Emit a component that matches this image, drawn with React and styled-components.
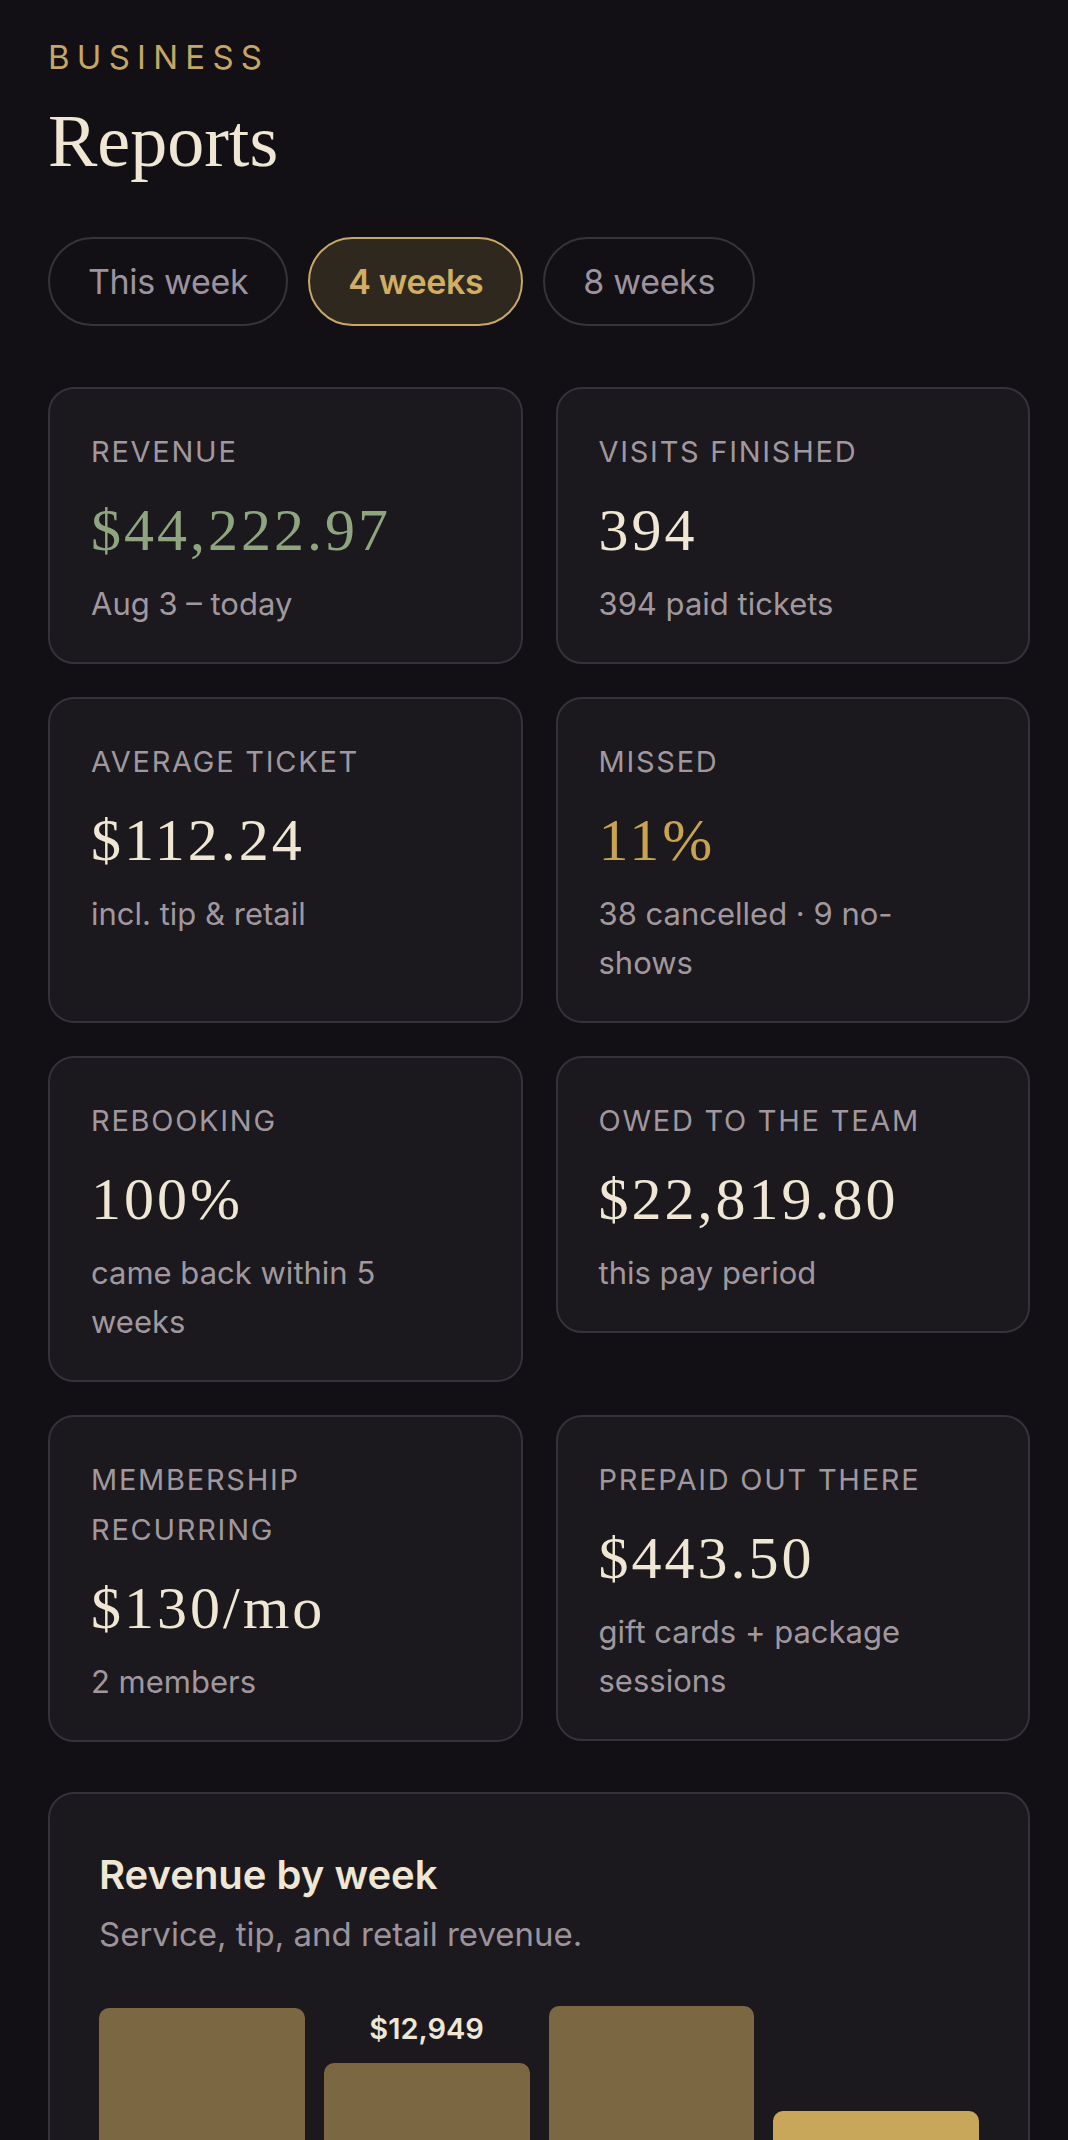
import React from 'react';
import styled, { createGlobalStyle } from 'styled-components';

const GlobalStyle = createGlobalStyle`
  html, body {
    margin: 0;
    padding: 0;
    background: #121015;
  }
  body {
    font-family: Inter, "Noto Sans", "Liberation Sans", sans-serif;
    color: #efe7d4;
  }
`;

const Page = styled.div`
  padding: 38px 38px 80px 48px;
`;

const Eyebrow = styled.div`
  font-size: 33px;
  line-height: 1.2;
  letter-spacing: 0.22em;
  color: #c6a664;
`;

const Title = styled.h1`
  margin: 24px 0 0;
  font-family: "Liberation Serif", serif;
  font-weight: 400;
  font-size: 74px;
  line-height: 78px;
  color: #efe7d4;
`;

const Ranges = styled.div`
  display: flex;
  gap: 20px;
  margin-top: 57px;
`;

const RangeButton = styled.button`
  box-sizing: border-box;
  height: 89px;
  padding: 0 38px;
  border-radius: 999px;
  border: 2px solid ${p => (p.$active ? '#c9a866' : '#38333a')};
  background: ${p => (p.$active ? '#2e281f' : 'transparent')};
  color: ${p => (p.$active ? '#d1ae63' : '#9d939e')};
  font-family: inherit;
  font-size: 34px;
  font-weight: ${p => (p.$active ? 600 : 400)};
  letter-spacing: -0.01em;
  cursor: pointer;
`;

const Grid = styled.div`
  display: grid;
  grid-template-columns: 1fr 1fr;
  gap: 33px;
  margin-top: 61px;
  align-items: start;
`;

const Card = styled.div`
  box-sizing: border-box;
  align-self: ${p => (p.$fill ? 'stretch' : 'start')};
  padding: 38px 70px 34px 41px;
  background: #1b191d;
  border: 2px solid #36313a;
  border-radius: 26px;
`;

const Label = styled.div`
  font-size: 29px;
  line-height: 50px;
  letter-spacing: 0.06em;
  text-transform: uppercase;
  color: #a1989f;
`;

const Value = styled.div`
  margin: 20px 0 16px;
  font-family: "Liberation Serif", serif;
  font-size: 60px;
  line-height: 66px;
  letter-spacing: 0.05em;
  white-space: nowrap;
  color: ${p => p.$tone === 'green' ? '#8ea57f' : p.$tone === 'gold' ? '#c9a352' : '#efe7d4'};
`;

const Sub = styled.div`
  font-size: 31px;
  line-height: 49px;
  color: #a1989f;
`;

const ChartCard = styled.section`
  margin-top: 50px;
  padding: 57px 49px 60px;
  background: #1b191d;
  border: 2px solid #36313a;
  border-radius: 26px;
`;

const ChartTitle = styled.h2`
  margin: 0;
  font-size: 40px;
  line-height: 48px;
  font-weight: 600;
  color: #efe7d4;
`;

const ChartSub = styled.p`
  margin: 12px 0 0;
  font-size: 33px;
  line-height: 46px;
  color: #9c939c;
`;

const Bars = styled.div`
  display: flex;
  align-items: flex-end;
  gap: 19px;
  height: 300px;
  margin-top: 40px;
`;

const BarColumn = styled.div`
  flex: 1;
  display: flex;
  flex-direction: column;
  align-items: center;
  justify-content: flex-end;
  height: 100%;
`;

const BarValue = styled.div`
  margin-bottom: 16px;
  font-size: 29px;
  line-height: 36px;
  font-weight: 600;
  color: #efe7d4;
`;

const Bar = styled.div`
  width: 100%;
  border-radius: 10px 10px 4px 4px;
  background: ${p => (p.$current ? '#c8a65a' : '#7b6742')};
`;

const stats = [
  { label: 'Revenue', value: '$44,222.97', sub: 'Aug 3 – today', tone: 'green' },
  { label: 'Visits finished', value: '394', sub: '394 paid tickets' },
  { label: 'Average ticket', value: '$112.24', sub: 'incl. tip & retail', fill: true },
  { label: 'Missed', value: '11%', sub: '38 cancelled · 9 no-shows', tone: 'gold' },
  { label: 'Rebooking', value: '100%', sub: 'came back within 5 weeks' },
  { label: 'Owed to the team', value: '$22,819.80', sub: 'this pay period' },
  { label: 'Membership recurring', value: '$130/mo', sub: '2 members' },
  { label: 'Prepaid out there', value: '$443.50', sub: 'gift cards + package sessions' },
];

const weeks = [
  { label: 'Aug 3', amount: 15993 },
  { label: 'Aug 10', amount: 12949, shown: true },
  { label: 'Aug 17', amount: 16104 },
  { label: 'Aug 24', amount: 10293, current: true },
];

const maxAmount = Math.max(...weeks.map(w => w.amount));

const App = () => (
  <Page>
    <GlobalStyle />
    <Eyebrow>BUSINESS</Eyebrow>
    <Title>Reports</Title>

    <Ranges>
      <RangeButton>This week</RangeButton>
      <RangeButton $active>4 weeks</RangeButton>
      <RangeButton>8 weeks</RangeButton>
    </Ranges>

    <Grid>
      {stats.map(s => (
        <Card key={s.label} $fill={s.fill}>
          <Label>{s.label}</Label>
          <Value $tone={s.tone}>{s.value}</Value>
          <Sub>{s.sub}</Sub>
        </Card>
      ))}
    </Grid>

    <ChartCard>
      <ChartTitle>Revenue by week</ChartTitle>
      <ChartSub>Service, tip, and retail revenue.</ChartSub>
      <Bars>
        {weeks.map(w => (
          <BarColumn key={w.label}>
            {w.shown && <BarValue>${w.amount.toLocaleString('en-US')}</BarValue>}
            <Bar $current={w.current} style={{ height: `${(w.amount / maxAmount) * 291}px` }} />
          </BarColumn>
        ))}
      </Bars>
    </ChartCard>
  </Page>
);

export default App;
